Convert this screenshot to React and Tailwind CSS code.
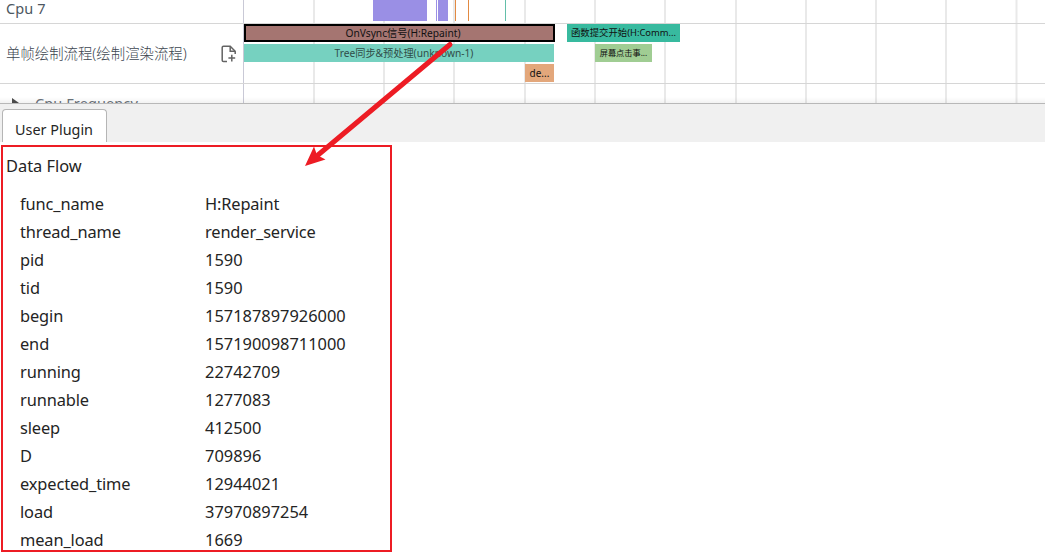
const rows = [
  ['func_name', 'H:Repaint'],
  ['thread_name', 'render_service'],
  ['pid', '1590'],
  ['tid', '1590'],
  ['begin', '157187897926000'],
  ['end', '157190098711000'],
  ['running', '22742709'],
  ['runnable', '1277083'],
  ['sleep', '412500'],
  ['D', '709896'],
  ['expected_time', '12944021'],
  ['load', '37970897254'],
  ['mean_load', '1669'],
];

const gridLines = [313, 383, 453, 524, 594, 664, 735, 805, 875, 945, 1015.5];

function AddFileIcon() {
  return (
    <svg className="h-[18px] w-[16px]" viewBox="0 0 16 18" fill="none" stroke="#636363" strokeWidth="1.5">
      <path d="M6 16.5H2.5Q1.2 16.5 1.2 15.2V2.6Q1.2 1.2 2.5 1.2H9.2L14.2 6.2V9" />
      <path d="M9.2 1.5V6.2H14" />
      <path d="M10.8 9.8V16.4M7.4 13H14.2" />
    </svg>
  );
}

function Timeline() {
  return (
    <section className="relative h-[103px] overflow-hidden bg-white">
      <svg className="absolute inset-0 h-full w-full" aria-hidden="true">
        {gridLines.map((x) => (
          <rect key={x} x={x} y="0" width="2" height="103" fill="#e9e9e9" />
        ))}
      </svg>
      <div className="relative flex h-[24px] border-b border-[#d6d6d6]">
        <div className="w-[244px] shrink-0 border-r border-[#c9c9d6] pl-[6px] text-[14.5px] leading-[17px] tracking-[0.1px] text-[#4d5761]">
          Cpu 7
        </div>
        <div className="flex h-[21px] pl-[129px]">
          <div className="w-[54px] bg-[#9a8fe5]" />
          <div className="ml-[9px] w-px bg-[#9a8fe5]" />
          <div className="ml-px w-[10px] bg-[#9a8fe5]" />
          <div className="ml-[7px] w-px bg-[#e28a42]" />
          <div className="ml-[12px] w-px bg-[#e28a42]" />
          <div className="ml-[36px] w-px bg-[#63bfa9]" />
        </div>
      </div>
      <div className="relative flex h-[60px] border-b border-[#d6d6d6]">
        <div className="flex w-[244px] shrink-0 items-center justify-between border-r border-[#c9c9d6] pl-[6px] pr-[6px]">
          <span className="whitespace-nowrap text-[14.4px] font-light text-[#3d4751]">单帧绘制流程(绘制渲染流程)</span>
          <AddFileIcon />
        </div>
        <div className="flex flex-col gap-[2px] whitespace-nowrap text-center text-[10px] leading-[18px] text-[#111]">
          <div className="flex h-[18px]">
            <div className="w-[311px] border-2 border-black bg-[#a57571] pl-[7px] text-[10.2px] leading-[15px]">OnVsync信号(H:Repaint)</div>
            <div className="ml-[12px] w-[113px] bg-[#38ba9f] text-[9.4px]">函数提交开始(H:Comm...</div>
          </div>
          <div className="flex h-[18px]">
            <div className="w-[310px] bg-[#76d1c0] pl-[10px] text-[10.2px] text-[#304d48]">Tree同步&amp;预处理(unknown-1)</div>
            <div className="ml-[41px] w-[57px] bg-[#a0cd93] text-[8.2px]">屏幕点击事...</div>
          </div>
          <div className="ml-[281px] h-[18px] w-[29px] bg-[#e3a77b] text-[10px]">de...</div>
        </div>
      </div>
      <div className="relative flex h-[19px]">
        <div className="flex w-[244px] shrink-0 border-r border-[#c9c9d6] pl-[12px] pt-[10px]">
          <svg className="mt-[4px] h-[10px] w-[7px]" viewBox="0 0 7 10">
            <path d="M0 0L7 5L0 10Z" fill="#4d4d4d" />
          </svg>
          <span className="ml-[16px] mt-[-1px] whitespace-nowrap text-[14.5px] leading-[20px] tracking-[0.1px] text-[#6a727a]">Cpu Frequency</span>
        </div>
      </div>
      <div className="absolute inset-x-0 bottom-0 h-[6px] bg-linear-to-b from-transparent to-black/5" />
    </section>
  );
}

export default function App() {
  return (
    <main className="relative flex h-[556px] w-[1045px] flex-col overflow-hidden bg-white font-['Noto_Sans','Noto_Sans_CJK_SC',sans-serif]">
      <Timeline />
      <div className="flex h-[39px] items-end border-t border-[#b8b8b8] bg-[#f0f0f0] pl-[2px]">
        <div className="h-[33px] w-[105px] rounded-t-[4px] border border-b-0 border-[#b5b5b5] bg-white pl-[12px] pt-[9px] text-[14.4px] leading-[22px] text-[#252525]">
          User Plugin
        </div>
      </div>
      <section className="ml-px mt-[3px] h-[407px] w-[391px] overflow-hidden border-2 border-[#ed1c24] pl-[3px] text-[16.4px] text-[#242424]">
        <h2 className="h-[43px] pt-[5px] leading-[28px]">Data Flow</h2>
        <dl className="pl-[14px]">
          {rows.map(([name, value]) => (
            <div key={name} className="flex h-[28px] leading-[28px]">
              <dt className="w-[185px] tracking-[-0.12px]">{name}</dt>
              <dd className={/^\d/.test(value) ? '' : 'tracking-[-0.15px]'}>{value}</dd>
            </div>
          ))}
        </dl>
      </section>
      <svg className="pointer-events-none absolute left-[300px] top-[38px] h-[132px] w-[156px]" viewBox="300 38 156 132">
        <path d="M450 44.5L318 155" stroke="#ed1c24" strokeWidth="5" strokeLinecap="round" />
        <path d="M305 166L314 146.5L317 155L325.5 159.5Z" fill="#ed1c24" />
      </svg>
    </main>
  );
}
